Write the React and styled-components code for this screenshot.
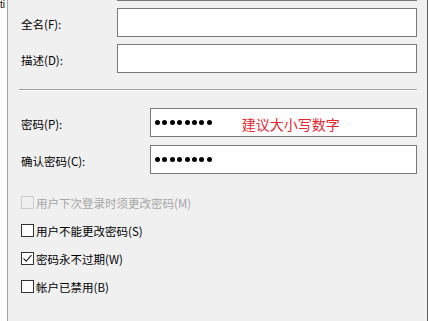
import React from "react";
import styled, { createGlobalStyle } from "styled-components";

const Global = createGlobalStyle`
  html, body { margin: 0; padding: 0; background: #ffffff; }
  body { font-family: "Noto Sans CJK SC", "Noto Sans", sans-serif; }
`;

const Page = styled.div`
  display: flex;
  align-items: flex-start;
  width: 429px;
  height: 321px;
  overflow: hidden;
  background: #ffffff;
`;

const LeftStrip = styled.div`
  width: 7px;
  height: 12px;
  flex: none;
  overflow: hidden;
  font-family: "Liberation Sans", sans-serif;
  font-size: 10px;
  line-height: 10px;
  color: #000;
  white-space: nowrap;
`;

const Panel = styled.div`
  flex: none;
  align-self: stretch;
  background: #f0f0f0;
  border-left: 1px solid #a3a3a3;
  border-right: 1px solid #5e5e5e;
  padding: 0 10px 0 13px;
  box-sizing: border-box;
  width: 421px;
  font-size: 11.5px;
  color: #000;
`;

const TopEdge = styled.div`
  margin-left: 96px;
  height: 0;
  border-top: 1px solid #7a7a7a;
`;

const FieldRow = styled.div`
  display: grid;
  grid-template-columns: ${(p) => p.$labelWidth}px 1fr;
  align-items: center;
  margin-top: ${(p) => p.$top}px;
`;

const Label = styled.span`
  font-size: 11.5px;
  line-height: 16px;
  padding-top: 2px;
`;

const Box = styled.div`
  height: 29px;
  box-sizing: border-box;
  background: #ffffff;
  border: 1px solid #7a7a7a;
  display: flex;
  align-items: center;
  padding-left: 4px;
`;

const Dots = styled.div`
  display: flex;
  gap: 2.4px;
  align-items: center;
`;

const Dot = styled.span`
  width: 5px;
  height: 5px;
  border-radius: 50%;
  background: #000;
`;

const Hint = styled.span`
  margin-left: 30px;
  color: #e3262f;
  font-size: 14px;
  line-height: 18px;
  padding-top: 3px;
`;

const Separator = styled.div`
  margin: 16px 0 0 -2px;
  height: 1px;
  background: #a0a0a0;
  border-bottom: 1px solid #ffffff;
`;

const Checks = styled.div`
  margin-top: 14px;
  display: flex;
  flex-direction: column;
`;

const CheckRow = styled.div`
  height: 28px;
  display: flex;
  align-items: center;
  gap: 2px;
  color: ${(p) => (p.$disabled ? "#a6a6a6" : "#000")};
`;

const Box13 = styled.span`
  width: 13px;
  height: 13px;
  box-sizing: border-box;
  border: 1px solid ${(p) => (p.$disabled ? "#cccccc" : "#333333")};
  background: ${(p) => (p.$disabled ? "#f0f0f0" : "#ffffff")};
  display: flex;
  align-items: center;
  justify-content: center;
  flex: none;
`;

const CheckText = styled.span`
  font-size: 11.5px;
  line-height: 16px;
  padding-top: 1px;
`;

function Check({ label, checked, disabled }) {
  return (
    <CheckRow $disabled={disabled}>
      <Box13 $disabled={disabled}>
        {checked && (
          <svg width="11" height="11" viewBox="0 0 11 11">
            <polyline points="1.5,5.5 4.2,8.2 9.5,2.2" fill="none" stroke="#222" strokeWidth="1.1" />
          </svg>
        )}
      </Box13>
      <CheckText>{label}</CheckText>
    </CheckRow>
  );
}

function PasswordDots() {
  return (
    <Dots>
      {Array.from({ length: 8 }).map((_, i) => (
        <Dot key={i} />
      ))}
    </Dots>
  );
}

export default function App() {
  return (
    <>
      <Global />
      <Page>
        <LeftStrip>ti</LeftStrip>
        <Panel>
          <TopEdge />
          <FieldRow $labelWidth={96} $top={7}>
            <Label>全名(F):</Label>
            <Box />
          </FieldRow>
          <FieldRow $labelWidth={96} $top={7}>
            <Label>描述(D):</Label>
            <Box />
          </FieldRow>
          <Separator />
          <FieldRow $labelWidth={129} $top={17}>
            <Label>密码(P):</Label>
            <Box>
              <PasswordDots />
              <Hint>建议大小写数字</Hint>
            </Box>
          </FieldRow>
          <FieldRow $labelWidth={129} $top={8}>
            <Label>确认密码(C):</Label>
            <Box>
              <PasswordDots />
            </Box>
          </FieldRow>
          <Checks>
            <Check label="用户下次登录时须更改密码(M)" disabled />
            <Check label="用户不能更改密码(S)" />
            <Check label="密码永不过期(W)" checked />
            <Check label="帐户已禁用(B)" />
          </Checks>
        </Panel>
      </Page>
    </>
  );
}
